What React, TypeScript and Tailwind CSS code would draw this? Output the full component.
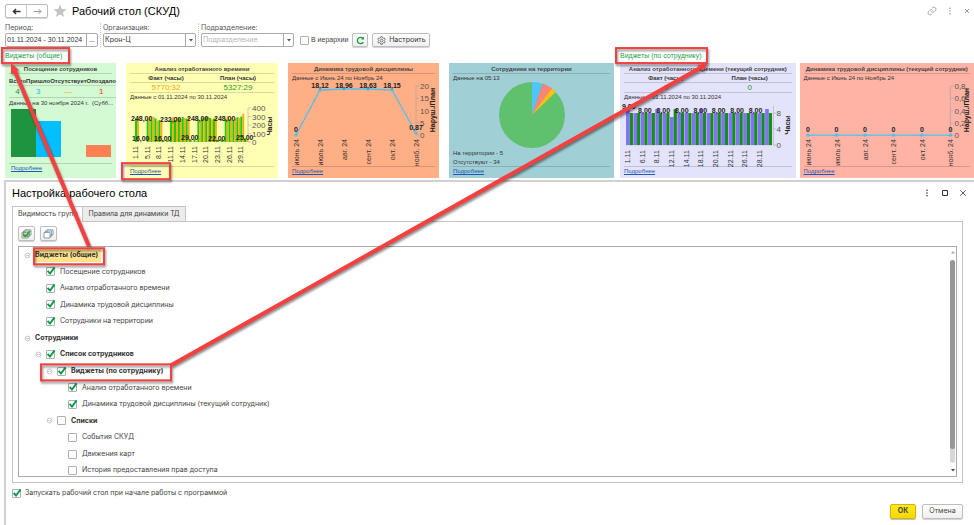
import { useState, type ReactNode } from "react";

const MONTHS = ["июнь 24", "июль 24", "авг. 24", "сент. 24", "окт. 24", "нояб. 24"];

// total hours per day, [fact, plan]
const HOURS = [
    [248, 256], [0, 0], [0, 0], [240, 262], [232, 268], [250, 225], [232, 232], [16, 0], [16, 12],
    [240, 262], [232, 268], [250, 240], [264, 255], [248, 270], [24, 0], [29, 12],
    [240, 225], [250, 262], [264, 268], [256, 240], [248, 262], [24, 0], [22, 12],
    [248, 270], [240, 262], [225, 250], [262, 255], [270, 300], [40, 25],
];
const HOURS_DAYS = ["1.11", "5.11", "8.11", "11.11", "14.11", "17.11", "20.11", "23.11", "26.11", "29.11"];
const EMPLOYEE_DAYS = ["1.11", "6.11", "8.11", "12.11", "14.11", "18.11", "20.11", "22.11", "26.11", "28.11"];
const EMPLOYEE_FACT = [9, 8, 8, 8, 9, 8, 7, 8, 8, 8, 9, 8, 8, 8, 8, 8, 8, 8, 8, 9];

type TreeRow = {
    level: number;
    label: string;
    toggle?: boolean;
    checked?: boolean;
    selected?: boolean;
};

const TREE: TreeRow[] = [
    { level: 0, label: "Виджеты (общие)", toggle: true, selected: true },
    { level: 1, label: "Посещение сотрудников", checked: true },
    { level: 1, label: "Анализ отработанного времени", checked: true },
    { level: 1, label: "Динамика трудовой дисциплины", checked: true },
    { level: 1, label: "Сотрудники на территории", checked: true },
    { level: 0, label: "Сотрудники", toggle: true },
    { level: 1, label: "Список сотрудников", toggle: true, checked: true },
    { level: 2, label: "Виджеты (по сотруднику)", toggle: true, checked: true },
    { level: 3, label: "Анализ отработанного времени", checked: true },
    { level: 3, label: "Динамика трудовой дисциплины (текущий сотрудник)", checked: true },
    { level: 2, label: "Списки", toggle: true, checked: false },
    { level: 3, label: "События СКУД", checked: false },
    { level: 3, label: "Движения карт", checked: false },
    { level: 3, label: "История предоставления прав доступа", checked: false },
];

const INDENT = ["pl-[5px]", "pl-[16px]", "pl-[27px]", "pl-[38px]"];

const BUTTON = "flex items-center justify-center rounded-[2px] border border-[#bdbdbd] bg-gradient-to-b from-white to-[#efefef] shadow-[0_1px_1px_#d0d0d0]";

function Check({ id, initial }: { id: string; initial: boolean }) {
    const [on, setOn] = useState(initial);
    return (
        <span className="relative block size-[9px] shrink-0">
            <input
                id={id}
                type="checkbox"
                checked={on}
                onChange={() => setOn(!on)}
                className="block size-[9px] appearance-none rounded-[1px] border border-[#b0b0b0] bg-white"
            />
            {on && (
                <svg viewBox="0 0 11 11" className="pointer-events-none absolute -top-px left-0 size-[11px]">
                    <path d="M1.6 4.8 L4 7.6 L8.6 1.4" fill="none" stroke="#0a9a4a" strokeWidth="1.9" />
                </svg>
            )}
        </span>
    );
}

function Dots() {
    return (
        <svg viewBox="0 0 8 8" className="size-2">
            <circle cx="4" cy="1.3" r="0.8" fill="currentColor" />
            <circle cx="4" cy="4" r="0.8" fill="currentColor" />
            <circle cx="4" cy="6.7" r="0.8" fill="currentColor" />
        </svg>
    );
}

function Cross() {
    return (
        <svg viewBox="0 0 8 8" className="size-2" fill="none" stroke="currentColor" strokeWidth="0.8">
            <path d="M1.2 1.2 L6.8 6.8 M6.8 1.2 L1.2 6.8" />
        </svg>
    );
}

function Select({ id, label, value, muted }: { id: string; label: string; value: string; muted?: boolean }) {
    return (
        <div className="w-[93px]">
            <label htmlFor={id} className="block leading-[10px] text-[#555]">{label}</label>
            <div className="relative">
                <select
                    id={id}
                    className={`block h-[14px] w-full appearance-none rounded-[2px] border border-[#aaa] bg-white pl-px leading-[12px] ${muted ? "text-[#b5b5b5]" : "text-[#333]"}`}
                >
                    <option>{value}</option>
                </select>
                <span className="pointer-events-none absolute inset-y-0 right-0 flex w-[11px] items-center justify-center border-l border-[#aaa]">
                    <svg viewBox="0 0 4 3" className="h-[3px] w-1"><path d="M0 0 H4 L2 2.6 Z" fill="#555" /></svg>
                </span>
            </div>
        </div>
    );
}

function Card({ title, color, children, roomy }: { title: string; color: string; children: ReactNode; roomy?: boolean }) {
    return (
        <section className={`flex h-[115px] min-w-0 flex-col px-1 pt-[2px] text-[6px] text-[#333] ${color}`}>
            <h3 className="border-b border-black/15 text-center font-bold leading-[8px] whitespace-nowrap text-[#444]">{title}</h3>
            {children}
            <div className={`mt-auto border-t border-black/15 leading-[9px] ${roomy ? "mb-[5px] pl-[2px]" : "mb-[2px]"}`}>
                <a href="#more" className="text-[#1e58b8] underline">Подробнее</a>
            </div>
        </section>
    );
}

function Totals({ fact, plan, factColor }: { fact: string; plan: string; factColor: string }) {
    return (
        <table className="w-full table-fixed text-center">
            <thead>
                <tr className="leading-[8px]">
                    <th className="font-bold">Факт (часы)</th>
                    <th className="font-bold">План (часы)</th>
                </tr>
            </thead>
            <tbody>
                <tr className="border-y border-black/15 text-[8px] leading-[9px]">
                    <td className={factColor}>{fact}</td>
                    <td className="text-[#2c9a2c]">{plan}</td>
                </tr>
            </tbody>
        </table>
    );
}

function AxisTitle({ x, y, children }: { x: number; y: number; children: string }) {
    return (
        <text x={x} y={y} transform={`rotate(-90 ${x} ${y})`} textAnchor="middle" fontSize="7" fontWeight="bold" fill="#222">
            {children}
        </text>
    );
}

function CategoryLabels({ labels, x, step, y }: { labels: string[]; x: number; step: number; y: number }) {
    return (
        <>
            {labels.map((label, i) => (
                <text
                    key={label}
                    transform={`translate(${x + i * step} ${y}) rotate(-90)`}
                    textAnchor="end"
                    fontSize="7"
                    fill="#333"
                >
                    {label}
                </text>
            ))}
        </>
    );
}

function HoursChart() {
    return (
        <svg viewBox="0 0 152 64" className="-mx-1 block overflow-visible">
            {HOURS.map(([fact, plan], i) => (
                <g key={i}>
                    <rect x={9 + i * 3.9} y={40 - fact / 10.6} width="2" height={fact / 10.6} fill="#12cf12" />
                    <rect x={11 + i * 3.9} y={40 - plan / 10.6} width="1.9" height={plan / 10.6} fill="#ffa814" />
                </g>
            ))}
            <path d="M125 6 H122 V40 H125 M122 14.5 H125 M122 23 H125 M122 31.5 H125" fill="none" stroke="#aaa" strokeWidth="0.6" />
            {["400", "300", "200", "100", "0"].map((t, i) => (
                <text key={t} x="126" y={9 + i * 8.5} fontSize="8" fill="#555">{t}</text>
            ))}
            <g fontSize="7" fontWeight="bold" fill="#222">
                <text x="5" y="19">248,00</text>
                <text x="34" y="20">232,00</text>
                <text x="61" y="19">248,00</text>
                <text x="88" y="19">248,00</text>
                <text x="6" y="39">16,00</text>
                <text x="28" y="39">16,00</text>
                <text x="55" y="38">29,00</text>
                <text x="82" y="39">22,00</text>
                <text x="110" y="38">25,00</text>
            </g>
            <CategoryLabels labels={HOURS_DAYS} x={12} step={11.7} y={44} />
            <AxisTitle x={146} y={24}>Часы</AxisTitle>
        </svg>
    );
}

function EmployeeHoursChart() {
    return (
        <svg viewBox="0 0 175 64" className="-mx-1 block overflow-visible">
            {EMPLOYEE_FACT.map((fact, i) => {
                const plan = i === 6 ? 9 : 8;
                return (
                    <g key={i}>
                        <rect x={6 + i * 7.3} y={43 - fact * 4} width="3.7" height={fact * 4} fill="#8470ff" />
                        <rect x={9.7 + i * 7.3} y={43 - plan * 4} width="3.2" height={plan * 4} fill="#149014" />
                    </g>
                );
            })}
            <path d="M153 4 V43 M153 11 H156 M153 27 H156 M153 43 H156" fill="none" stroke="#aaa" strokeWidth="0.6" />
            {["8", "4", "0"].map((t, i) => (
                <text key={t} x="156" y={14 + i * 16} fontSize="8" fill="#555">{t}</text>
            ))}
            <g fontSize="7" fontWeight="bold" fill="#222">
                <text x="2" y="7">9,00</text>
                {[0, 1, 2, 3, 4, 5, 6].map((i) => (
                    <text key={i} x={18 + i * 18.4} y="11">8,00</text>
                ))}
            </g>
            <CategoryLabels labels={EMPLOYEE_DAYS} x={10} step={14.6} y={48} />
            <AxisTitle x={170} y={23}>Часы</AxisTitle>
        </svg>
    );
}

type LineChartProps = {
    width: number;
    step: number;
    points: number[];
    values: string[];
    ticks: string[];
};

function LineChart({ width, step, points, values, ticks }: LineChartProps) {
    const axis = 8 + step * 5;
    const gap = 49 / (ticks.length - 1);
    return (
        <svg viewBox={`0 0 ${width} 84`} className="-mx-1 block overflow-visible">
            <path d={`M${axis} 4 V53`} stroke="#b5a0a0" strokeWidth="0.7" />
            {ticks.map((t, i) => (
                <g key={t}>
                    <path d={`M${axis} ${4 + i * gap} h3`} stroke="#b5a0a0" strokeWidth="0.7" />
                    <text x={axis + 4} y={7 + i * gap} fontSize="8" fill="#555">{t}</text>
                </g>
            ))}
            <polyline
                points={points.map((y, i) => `${8 + i * step},${y}`).join(" ")}
                fill="none"
                stroke="#4fc0f5"
                strokeWidth="1.3"
            />
            {points.map((y, i) => (
                <g key={i}>
                    <circle cx={8 + i * step} cy={y} r="1.7" fill="#4fc0f5" />
                    <text x={8 + i * step} y={Math.max(y - 3, 6)} textAnchor="middle" fontSize="7" fontWeight="bold" fill="#222">
                        {values[i]}
                    </text>
                </g>
            ))}
            <CategoryLabels labels={MONTHS} x={11} step={step} y={57} />
            <AxisTitle x={axis + 19} y={28}>Наруш./План</AxisTitle>
        </svg>
    );
}

function GeneralWidgets() {
    return (
        <div className="grid grid-cols-[111fr_152fr_151fr_165fr] gap-[10px]">
            <Card title="Посещение сотрудников" color="bg-[#d3fad3]" roomy>
                <table className="mt-[3px] w-full text-center">
                    <thead>
                        <tr className="border-b border-black/10 leading-[8px]">
                            <th className="p-0 font-bold">Всего</th>
                            <th className="p-0 font-bold">Пришло</th>
                            <th className="p-0 font-bold">Отсутствует</th>
                            <th className="p-0 font-bold">Опоздало</th>
                        </tr>
                    </thead>
                    <tbody>
                        <tr className="border-b border-black/15 text-[8px] leading-[11px]">
                            <td className="text-[#1f9440]">4</td>
                            <td className="text-[#18b4f5]">3</td>
                            <td className="text-[#f5a623]">—</td>
                            <td className="text-[#ff2a1a]">1</td>
                        </tr>
                    </tbody>
                </table>
                <p className="leading-[10px] whitespace-nowrap">Данные на 30 ноября 2024 г. &nbsp;(Субб...</p>
                <svg viewBox="0 0 103 49" className="mt-px block">
                    <rect x="2" y="0" width="25" height="48" fill="#1f9440" />
                    <rect x="27" y="12" width="25" height="36" fill="#04bfff" />
                    <rect x="77" y="36" width="25" height="12" fill="#ff8052" />
                </svg>
            </Card>
            <Card title="Анализ отработанного времени" color="bg-[#ffffb4]">
                <Totals fact="5770:32" plan="5327:29" factColor="text-[#ffa314]" />
                <p className="leading-[9px]">Данные с 01.11.2024 по 30.11.2024</p>
                <HoursChart />
            </Card>
            <Card title="Динамика трудовой дисциплины" color="bg-[#ffaf85]">
                <p className="leading-[8px]">Данные с Июнь 24 по Ноябрь 24</p>
                <LineChart
                    width={151}
                    step={24}
                    points={[53, 8, 7, 7, 8, 51]}
                    values={["0", "18,12", "18,96", "18,63", "18,15", "0,87"]}
                    ticks={["20", "15", "10", "5", "0"]}
                />
            </Card>
            <Card title="Сотрудники на территории" color="bg-[#a0cfd5]">
                <p className="leading-[8px]">Данные на 05:13</p>
                <svg viewBox="-33 -33 66 66" className="mx-auto block size-[66px] shrink-0">
                    <circle r="33" fill="#5fc16e" />
                    <path d="M0 0 V-33 A33 33 0 0 1 10.7 -31.2 Z" fill="#4fc6fb" />
                    <path d="M0 0 L10.7 -31.2 A33 33 0 0 1 19.9 -26.4 Z" fill="#ff8478" />
                    <path d="M0 0 L19.9 -26.4 A33 33 0 0 1 23.7 -22.9 Z" fill="#ffc10a" />
                </svg>
                <p className="mt-px leading-[9px]">На территории - 5</p>
                <p className="leading-[8px]">Отсутствуют - 34</p>
            </Card>
        </div>
    );
}

function EmployeeWidgets() {
    return (
        <div className="grid grid-cols-[175fr_174fr] gap-1">
            <Card title="Анализ отработанного времени (текущий сотрудник)" color="bg-[#e3e3fb]">
                <Totals fact="0" plan="0" factColor="text-[#8470ff]" />
                <p className="leading-[9px]">Данные с 01.11.2024 по 30.11.2024</p>
                <EmployeeHoursChart />
            </Card>
            <Card title="Динамика трудовой дисциплины (текущий сотрудник)" color="bg-[#ffb3a5]">
                <p className="leading-[8px]">Данные с Июнь 24 по Ноябрь 24</p>
                <LineChart
                    width={174}
                    step={28.4}
                    points={[53, 53, 53, 53, 53, 53]}
                    values={["0", "0", "0", "0", "0", "0"]}
                    ticks={["0,8", "0,6", "0,4", "0,2", "0"]}
                />
            </Card>
        </div>
    );
}

function SettingsTree() {
    return (
        <div className="mt-[5px] flex h-[231px] overflow-hidden border border-[#aaa]">
            <ul className="grid h-[232px] flex-1 auto-rows-fr">
                {TREE.map((row, i) => (
                    <li key={i} className={`flex items-center ${INDENT[row.level]}`}>
                        <span className="mr-1 flex w-[7px] shrink-0 justify-center">
                            {row.toggle && (
                                <button type="button" aria-label="Свернуть">
                                    <svg viewBox="0 0 7 7" className="block size-[7px]" fill="none" stroke="#aaa" strokeWidth="0.7">
                                        <circle cx="3.5" cy="3.5" r="2.4" />
                                        <path d="M2.2 3.5 H4.8" />
                                    </svg>
                                </button>
                            )}
                        </span>
                        {row.checked !== undefined && <Check id={`row-${i}`} initial={row.checked} />}
                        {row.checked !== undefined ? (
                            <label htmlFor={`row-${i}`} className={`ml-[5px] ${row.toggle ? "font-bold text-[#333]" : ""}`}>{row.label}</label>
                        ) : (
                            <span className={`pr-[3px] font-bold leading-[14px] text-[#333] ${row.selected ? "bg-[#ffe38a]" : ""}`}>{row.label}</span>
                        )}
                    </li>
                ))}
            </ul>
            <div className="mr-[1px] flex w-[5px] flex-col items-center py-1">
                <svg viewBox="0 0 4 3" className="h-[3px] w-1"><path d="M0 2.6 H4 L2 0 Z" fill="#aaa" /></svg>
                <div className="my-[6px] w-[5px] flex-1 rounded-full bg-[#d6d6d6]">
                    <div className="h-[93%] rounded-full bg-[#979797]" />
                </div>
                <svg viewBox="0 0 4 3" className="h-[3px] w-1"><path d="M0 0 H4 L2 2.6 Z" fill="#444" /></svg>
            </div>
        </div>
    );
}

// Red callouts that tie the widget groups to their rows in the tree
function Callouts() {
    return (
        <svg
            viewBox="0 0 974 525"
            preserveAspectRatio="none"
            className="pointer-events-none absolute inset-0 h-full w-full drop-shadow-[1px_2px_1px_rgba(0,0,0,0.45)]"
        >
            <g fill="none" stroke="#f4403f" strokeWidth="2">
                <rect x="2" y="48" width="67" height="15" />
                <rect x="122" y="163" width="48" height="16" />
                <rect x="616" y="48" width="91" height="15" />
                <rect x="34" y="248" width="70" height="16" />
                <rect x="41" y="364" width="130" height="16" />
            </g>
            <g stroke="#f4403f" strokeWidth="4">
                <path d="M89 246 L14 69" />
                <path d="M171 365 L700 68" />
            </g>
            <path d="M11 63 L19 70 L11 74 Z M708 63 L703 71 L697 65 Z" fill="#f4403f" />
        </svg>
    );
}

export default function App() {
    return (
        <div className="relative min-h-screen bg-white font-['Liberation_Sans',Arial,sans-serif] text-[7px] text-[#444]">
            <header className="flex h-[22px] items-center pr-[3px] pl-[5px]">
                <div className="flex h-[14px] w-[43px] rounded-[2px] border border-[#bbb] shadow-[0_1px_1px_#d8d8d8]">
                    <button type="button" aria-label="Назад" className="flex flex-1 items-center justify-center border-r border-[#ccc]">
                        <svg viewBox="0 0 9 7" className="h-[7px] w-[9px]" fill="none" stroke="#333" strokeWidth="1.5"><path d="M8.5 3.5 H1.5 M4 1 L1.5 3.5 L4 6" /></svg>
                    </button>
                    <button type="button" aria-label="Вперед" className="flex flex-1 items-center justify-center">
                        <svg viewBox="0 0 9 7" className="h-[7px] w-[9px]" fill="none" stroke="#999" strokeWidth="1"><path d="M0.5 3.5 H8 M5.5 1 L8 3.5 L5.5 6" /></svg>
                    </button>
                </div>
                <svg viewBox="0 0 14 14" className="ml-[5px] size-[14px]">
                    <path d="M7 0.5 L8.8 5 L13.6 5.3 L9.9 8.4 L11.1 13.1 L7 10.5 L2.9 13.1 L4.1 8.4 L0.4 5.3 L5.2 5 Z" fill="#c4c4c4" />
                </svg>
                <h1 className="ml-[5px] text-[11px] text-black">Рабочий стол (СКУД)</h1>
                <div className="ml-auto flex items-center gap-[9px] text-[#999]">
                    <svg viewBox="0 0 24 24" className="size-[10px]" fill="none" stroke="currentColor" strokeWidth="2">
                        <path d="M10 13a5 5 0 0 0 7.5.5l3-3a5 5 0 0 0-7-7l-1.7 1.7" />
                        <path d="M14 11a5 5 0 0 0-7.5-.5l-3 3a5 5 0 0 0 7 7l1.7-1.7" />
                    </svg>
                    <Dots />
                    <svg viewBox="0 0 8 8" className="size-2" fill="none" stroke="currentColor" strokeWidth="1">
                        <path d="M2 2 L6 6 M6 2 L2 6" />
                    </svg>
                </div>
            </header>

            <form className="flex h-[27px] items-start pt-px pl-[5px] font-['Inter','Liberation_Sans',sans-serif]">
                <div className="w-[93px]">
                    <label htmlFor="period" className="block leading-[10px] text-[#555]">Период:</label>
                    <div className="flex h-[14px] rounded-[2px] border border-[#aaa]">
                        <input id="period" defaultValue="01.11.2024 - 30.11.2024" className="w-0 flex-1 pl-px font-['Liberation_Sans',Arial,sans-serif] text-[#333]" />
                        <button type="button" className="w-[11px] border-l border-[#aaa]">...</button>
                    </div>
                </div>
                <div className="mx-[2px] h-6 border-l border-dotted border-[#ccc]" />
                <Select id="org" label="Организация:" value="Крон-Ц" />
                <div className="mx-[2px] h-6 border-l border-dotted border-[#ccc]" />
                <Select id="dept" label="Подразделение:" value="Подразделение" muted />
                <div className="mt-[10px] ml-[6px] flex h-[14px] items-center">
                    <Check id="hierarchy" initial={false} />
                    <label htmlFor="hierarchy" className="ml-[2px] font-['Liberation_Sans',Arial,sans-serif]">В иерархии</label>
                    <button type="button" aria-label="Обновить" className={`ml-[4px] h-[14px] w-4 ${BUTTON}`}>
                        <svg viewBox="0 0 9 9" className="size-[9px]" fill="none" stroke="#12a332" strokeWidth="1.3">
                            <path d="M7.3 6.2 A3.2 3.2 0 1 1 6.9 2.3" />
                            <path d="M8 0.6 V3.6 H5 Z" fill="#12a332" stroke="none" />
                        </svg>
                    </button>
                    <button type="button" className={`ml-[4px] h-[14px] w-[58px] gap-[3px] text-[#333] ${BUTTON}`}>
                        <svg viewBox="0 0 24 24" className="size-[9px] shrink-0" fill="none" stroke="#555" strokeWidth="2">
                            <path d="M10 2h4l.7 3 2 1.1 3-.9 2 3.5-2.2 2.2v2.2l2.2 2.2-2 3.5-3-.9-2 1.1-.7 3h-4l-.7-3-2-1.1-3 .9-2-3.5 2.2-2.2v-2.2L2.300 8.700l2-3.500 3 .9 2-1.100z" />
                            <circle cx="12" cy="12" r="3.5" />
                        </svg>
                        Настроить
                    </button>
                </div>
            </form>

            <main className="flex gap-[6px] pl-[5px] text-[7px]">
                <div className="min-w-0 flex-[609]">
                    <h2 className="leading-[14px] text-[#1fa04c]">Виджеты (общие)</h2>
                    <GeneralWidgets />
                </div>
                <div className="min-w-0 flex-[354]">
                    <h2 className="leading-[14px] text-[#1fa04c]">Виджеты (по сотруднику)</h2>
                    <EmployeeWidgets />
                </div>
            </main>

            <div role="dialog" aria-labelledby="settings-title" className="mt-[2px] ml-1 border-t-2 border-l-2 border-[#d0d0d0] bg-white pr-[11px] pb-[7px] pl-[6px] font-['Inter','Liberation_Sans',sans-serif]">
                <div className="flex h-[22px] items-center">
                    <h2 id="settings-title" className="font-['Liberation_Sans',Arial,sans-serif] text-[11px] text-black">Настройка рабочего стола</h2>
                    <div className="-mr-1 ml-auto flex gap-[10px] text-[#333]">
                        <Dots />
                        <svg viewBox="0 0 8 8" className="size-2" fill="none" stroke="currentColor" strokeWidth="1"><path d="M1.5 1.5 H6.5 V6.5 H1.5 Z" /></svg>
                        <Cross />
                    </div>
                </div>

                <div role="tablist" className="mt-[2px] flex">
                    <button type="button" role="tab" aria-selected="true" className="relative -mb-px h-4 w-[71px] border border-b-0 border-[#c4c4c4] bg-white pl-[5px] text-left whitespace-nowrap">Видимость групп</button>
                    <button type="button" role="tab" aria-selected="false" className="h-[15px] w-[103px] border border-b-0 border-l-0 border-[#c4c4c4] bg-[#ececec] whitespace-nowrap">Правила для динамики ТД</button>
                </div>
                <div className="border border-[#c4c4c4] px-[5px] pt-[4px] pb-[5px]">
                    <div className="flex gap-[5px]">
                        <button type="button" aria-label="Отметить все" className={`h-[15px] w-[17px] ${BUTTON}`}>
                            <svg viewBox="0 0 11 10" className="h-[10px] w-[11px]" fill="#fff" stroke="#6d8590" strokeWidth="0.8">
                                <path d="M4 .8H10V6H4Z M2.5 2H8.5V7.5H2.5Z M1 3.4H7V9H1Z" />
                                <path d="M2 5.2 L4.2 7.5 L9 2.2" fill="none" stroke="#35a814" strokeWidth="1.8" />
                            </svg>
                        </button>
                        <button type="button" aria-label="Снять все" className={`h-[15px] w-[17px] ${BUTTON}`}>
                            <svg viewBox="0 0 11 10" className="h-[10px] w-[11px]" fill="#fff" stroke="#6d8ba0" strokeWidth="0.8">
                                <path d="M4 .8H10V6H4Z M2.5 2H8.5V7.5H2.5Z" />
                                <path d="M1 3.4H7V9H1Z" />
                            </svg>
                        </button>
                    </div>
                    <SettingsTree />
                </div>

                <div className="mt-[5px] flex items-center">
                    <Check id="autostart" initial={true} />
                    <label htmlFor="autostart" className="ml-1">Запускать рабочий стол при начале работы с программой</label>
                </div>
                <div className="mt-[5px] flex justify-end gap-[6px]">
                    <button type="button" className="h-[15px] w-[26px] rounded-[2px] border border-[#d0b800] bg-gradient-to-b from-[#ffe818] to-[#f5d800] font-bold text-[#444] shadow-[0_1px_1px_#bbb]">ОК</button>
                    <button type="button" className={`h-[15px] w-[41px] ${BUTTON}`}>Отмена</button>
                </div>
            </div>

            <Callouts />
        </div>
    );
}
